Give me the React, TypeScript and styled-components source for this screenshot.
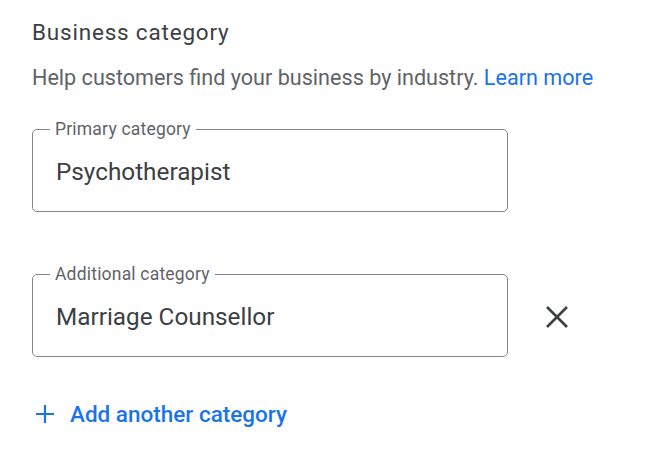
import React, { FC } from 'react';
import styled, { createGlobalStyle } from 'styled-components';

const GlobalStyle = createGlobalStyle`
  body {
    margin: 0;
    background: #fff;
    font-family: Roboto, 'Noto Sans', Arial, sans-serif;
  }
`;

const Page = styled.div`
  padding: 18px 32px 0 32px;
  display: flex;
  flex-direction: column;
  color: #3c4043;
`;

const Title = styled.h2`
  margin: 0;
  font-size: 22.5px;
  font-weight: 400;
  line-height: 28px;
  letter-spacing: 0.8px;
  color: #3c4043;
`;

const Description = styled.p`
  margin: 20px 0 0 0;
  font-size: 21.6px;
  line-height: 24px;
  color: #5f6368;

  a {
    color: #1a73e8;
    text-decoration: none;
  }
`;

const Row = styled.div<{ $top: number }>`
  display: flex;
  align-items: center;
  gap: 37px;
  margin-top: ${(p) => p.$top}px;
`;

const Field = styled.fieldset`
  margin: 0;
  width: 476px;
  height: 93px;
  box-sizing: border-box;
  border: 1px solid #80868b;
  border-radius: 5px;
  padding: 0 0 0 23px;
  display: flex;
  align-items: center;
`;

const Legend = styled.legend`
  padding: 0 5px;
  margin-left: -6px;
  font-size: 17.5px;
  line-height: 20px;
  letter-spacing: 0.2px;
  color: #5f6368;
`;

const Value = styled.div`
  font-size: 24.3px;
  line-height: 28px;
  color: #3c4043;
  margin-top: -7px;
`;

const IconButton = styled.button`
  border: 0;
  background: none;
  padding: 0;
  width: 24px;
  height: 24px;
  display: flex;
  align-items: center;
  justify-content: center;
  cursor: pointer;
  color: #3c4043;
  margin-top: 13px;
`;

const AddLink = styled.button`
  margin-top: 44px;
  align-self: flex-start;
  border: 0;
  background: none;
  padding: 0 0 0 4px;
  display: flex;
  align-items: center;
  gap: 16px;
  font-family: inherit;
  font-size: 22.5px;
  line-height: 26px;
  font-weight: 500;
  color: #1a73e8;
  cursor: pointer;
`;

interface CategoryFieldProps {
  label: string;
  value: string;
}

const CategoryField: FC<CategoryFieldProps> = ({ label, value }) => (
  <Field>
    <Legend>{label}</Legend>
    <Value>{value}</Value>
  </Field>
);

const CloseIcon = () => (
  <svg width="24" height="24" viewBox="0 0 24 24" fill="none">
    <path d="M2 2 L22 22 M22 2 L2 22" stroke="currentColor" strokeWidth="2.6" />
  </svg>
);

const PlusIcon = () => (
  <svg width="18" height="18" viewBox="0 0 18 18" fill="none">
    <path d="M9 0 V18 M0 9 H18" stroke="currentColor" strokeWidth="2.2" />
  </svg>
);

const App: FC = () => (
  <>
    <GlobalStyle />
    <Page>
      <Title>Business category</Title>
      <Description>
        Help customers find your business by industry. <a href="#">Learn more</a>
      </Description>
      <Row $top={29}>
        <CategoryField label="Primary category" value="Psychotherapist" />
      </Row>
      <Row $top={52}>
        <CategoryField label="Additional category" value="Marriage Counsellor" />
        <IconButton aria-label="Remove">
          <CloseIcon />
        </IconButton>
      </Row>
      <AddLink>
        <PlusIcon />
        Add another category
      </AddLink>
    </Page>
  </>
);

export default App;
